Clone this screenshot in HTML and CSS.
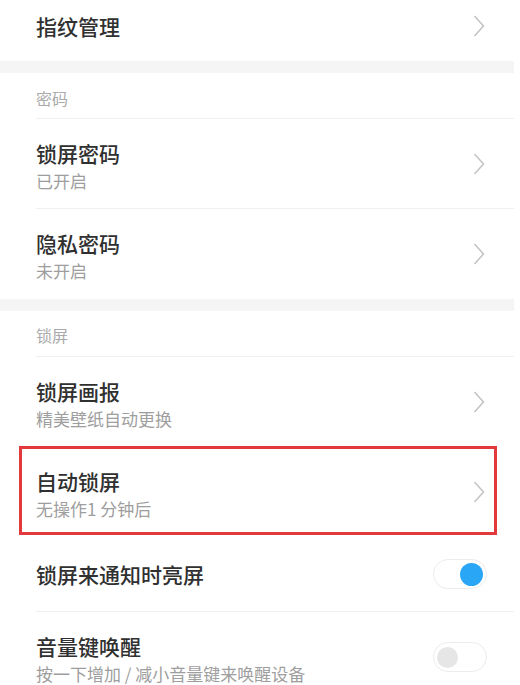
FILE: index.html
```html
<!DOCTYPE html>
<html>
<head>
    <meta charset="utf-8">
    <title>锁屏和密码</title>
    <link rel="stylesheet" href="styles.css">
</head>
<body>
    <div class="settings">
        <!-- 指纹 -->
        <div class="group">
            <div class="row first">
                <div class="text">
                    <div class="title">指纹管理</div>
                </div>
                <svg class="arrow" width="12" height="22" viewBox="0 0 12 22"><polyline points="1.5,1 10.5,11 1.5,21"/></svg>
            </div>
        </div>

        <div class="band"></div>

        <!-- 密码 -->
        <div class="group">
            <div class="header">密码</div>
            <div class="row two line">
                <div class="text">
                    <div class="title">锁屏密码</div>
                    <div class="sub">已开启</div>
                </div>
                <svg class="arrow" width="12" height="22" viewBox="0 0 12 22"><polyline points="1.5,1 10.5,11 1.5,21"/></svg>
            </div>
            <div class="row two">
                <div class="text">
                    <div class="title">隐私密码</div>
                    <div class="sub">未开启</div>
                </div>
                <svg class="arrow" width="12" height="22" viewBox="0 0 12 22"><polyline points="1.5,1 10.5,11 1.5,21"/></svg>
            </div>
        </div>

        <div class="band"></div>

        <!-- 锁屏 -->
        <div class="group">
            <div class="header second">锁屏</div>
            <div class="row two">
                <div class="text">
                    <div class="title">锁屏画报</div>
                    <div class="sub">精美壁纸自动更换</div>
                </div>
                <svg class="arrow" width="12" height="22" viewBox="0 0 12 22"><polyline points="1.5,1 10.5,11 1.5,21"/></svg>
            </div>
            <div class="row two marked">
                <div class="text">
                    <div class="title">自动锁屏</div>
                    <div class="sub">无操作1 分钟后</div>
                </div>
                <svg class="arrow" width="12" height="22" viewBox="0 0 12 22"><polyline points="1.5,1 10.5,11 1.5,21"/></svg>
            </div>
            <div class="row single line">
                <div class="text">
                    <div class="title">锁屏来通知时亮屏</div>
                </div>
                <div class="switch on"><span class="knob"></span></div>
            </div>
            <div class="row two">
                <div class="text">
                    <div class="title">音量键唤醒</div>
                    <div class="sub">按一下增加 / 减小音量键来唤醒设备</div>
                </div>
                <div class="switch"><span class="knob"></span></div>
            </div>
        </div>
    </div>
</body>
</html>
```

FILE: styles.css
```css
html, body {
    margin: 0;
    padding: 0;
    background: #fff;
}
body {
    font-family: "Noto Sans CJK SC", "Noto Sans", sans-serif;
    overflow: hidden;
}
.settings {
    width: 514px;
}
.band {
    height: 12px;
    background: #f5f5f5;
}
.group {
    padding-left: 36px;
}
.header {
    height: 46px;
    box-sizing: border-box;
    padding-top: 14px;
    font-size: 16px;
    line-height: 22px;
    color: #aaa;
    border-bottom: 1px solid #f0f0f0;
}
.header.second {
    padding-top: 13px;
}
.row {
    display: flex;
    align-items: center;
    justify-content: space-between;
    padding-right: 29px;
}
.row.first {
    height: 61px;
    box-sizing: border-box;
    padding-bottom: 9px;
}
.row.two {
    height: 90px;
    box-sizing: border-box;
}
.row.single {
    height: 74px;
    box-sizing: content-box;
}
.row.line {
    border-bottom: 1px solid #f0f0f0;
}
.row.two .text {
    align-self: flex-start;
    padding-top: 19px;
}
.title {
    font-size: 21px;
    line-height: 30px;
    font-weight: 500;
    color: #303030;
}
.sub {
    font-size: 17px;
    line-height: 26px;
    color: #9e9e9e;
}
.arrow {
    display: block;
    fill: none;
    stroke: #c2c2c2;
    stroke-width: 1.5;
}
.marked {
    position: relative;
}
.marked::after {
    content: "";
    position: absolute;
    top: -1px;
    bottom: 2px;
    left: -17px;
    right: 17px;
    border: 3px solid #e23a3c;
}
.switch {
    width: 54px;
    height: 30px;
    box-sizing: border-box;
    border: 1px solid #ececec;
    border-radius: 15px;
    background: #fff;
    display: flex;
    align-items: center;
    padding: 0 3px;
    margin-right: -2px;
}
.switch.on {
    justify-content: flex-end;
}
.knob {
    width: 21px;
    height: 21px;
    border-radius: 50%;
    background: #e6e6e6;
}
.switch.on .knob {
    width: 23px;
    height: 23px;
    background: #2aa6f6;
}
```
